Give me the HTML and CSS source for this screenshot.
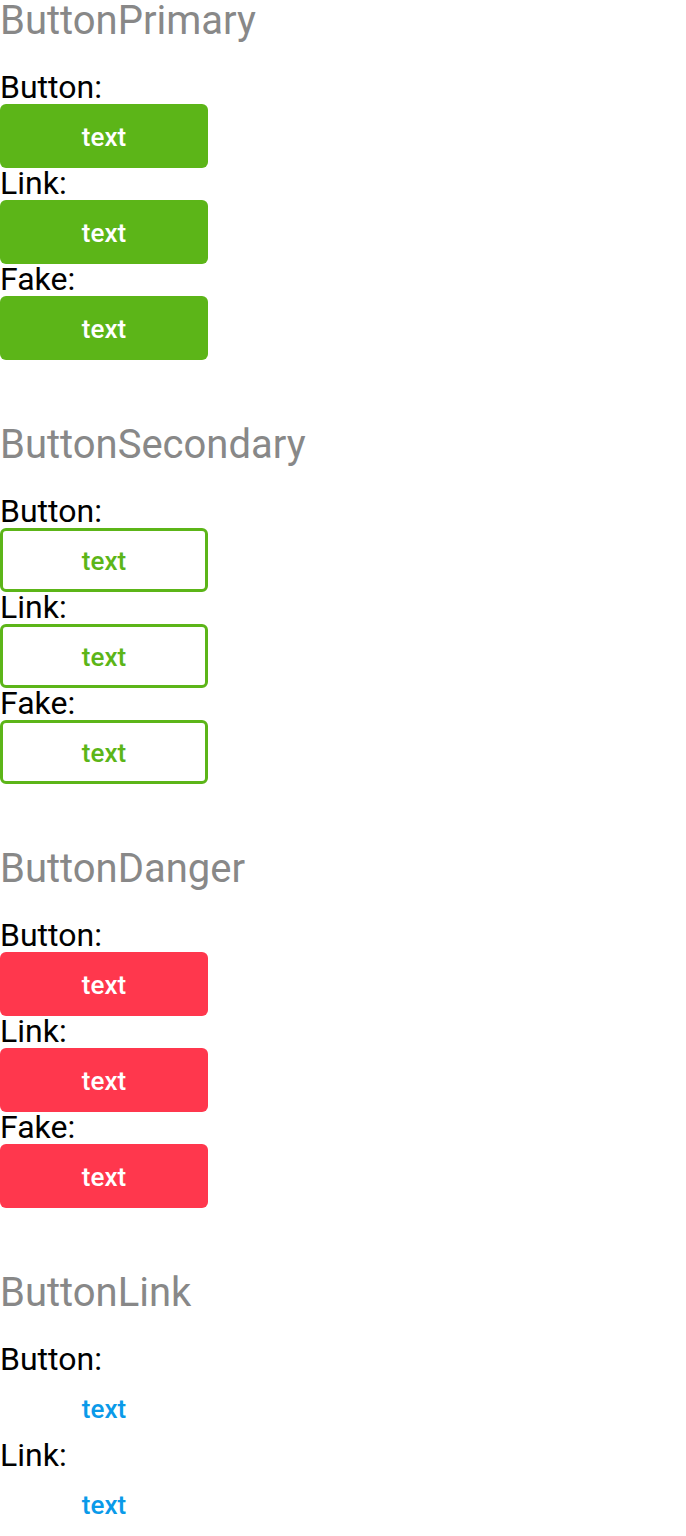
FILE: index.html
```html
<!DOCTYPE html>
<html>
<head>
<meta charset="utf-8">
<link rel="stylesheet" href="styles.css">
</head>
<body>
<section class="group">
  <h2 class="title">ButtonPrimary</h2>
  <div class="label">Button:</div>
  <button class="btn btn-primary">text</button>
  <div class="label">Link:</div>
  <a class="btn btn-primary" href="#">text</a>
  <div class="label">Fake:</div>
  <span class="btn btn-primary">text</span>
</section>
<section class="group">
  <h2 class="title">ButtonSecondary</h2>
  <div class="label">Button:</div>
  <button class="btn btn-secondary">text</button>
  <div class="label">Link:</div>
  <a class="btn btn-secondary" href="#">text</a>
  <div class="label">Fake:</div>
  <span class="btn btn-secondary">text</span>
</section>
<section class="group">
  <h2 class="title">ButtonDanger</h2>
  <div class="label">Button:</div>
  <button class="btn btn-danger">text</button>
  <div class="label">Link:</div>
  <a class="btn btn-danger" href="#">text</a>
  <div class="label">Fake:</div>
  <span class="btn btn-danger">text</span>
</section>
<section class="group">
  <h2 class="title">ButtonLink</h2>
  <div class="label">Button:</div>
  <button class="btn btn-link">text</button>
  <div class="label">Link:</div>
  <a class="btn btn-link" href="#">text</a>
</section>
</body>
</html>
```

FILE: styles.css
```css
html, body {
  margin: 0;
  padding: 0;
  background: #ffffff;
}
body {
  font-family: Roboto, "Liberation Sans", sans-serif;
  color: #000000;
}
.group {
  display: flex;
  flex-direction: column;
  align-items: flex-start;
  margin-bottom: 64px;
}
.title {
  margin: 0 0 32px 0;
  font-size: 40px;
  line-height: 42px;
  height: 40px;
  font-weight: 400;
  color: #888888;
}
.label {
  font-size: 32px;
  line-height: 30px;
  height: 32px;
}
.btn {
  box-sizing: border-box;
  display: flex;
  align-items: center;
  justify-content: center;
  width: 208px;
  height: 64px;
  margin: 0;
  padding: 2px 0 0 0;
  border: none;
  border-radius: 6px;
  font-family: Roboto, "Liberation Sans", sans-serif;
  font-size: 26px;
  font-weight: 500;
  text-decoration: none;
  cursor: pointer;
}
.btn-primary {
  background: #5cb518;
  color: #ffffff;
}
.btn-secondary {
  background: #ffffff;
  border: 3px solid #5cb518;
  color: #5cb518;
}
.btn-danger {
  background: #ff374d;
  color: #ffffff;
}
.btn-link {
  background: transparent;
  color: #0a9ae9;
}
```
